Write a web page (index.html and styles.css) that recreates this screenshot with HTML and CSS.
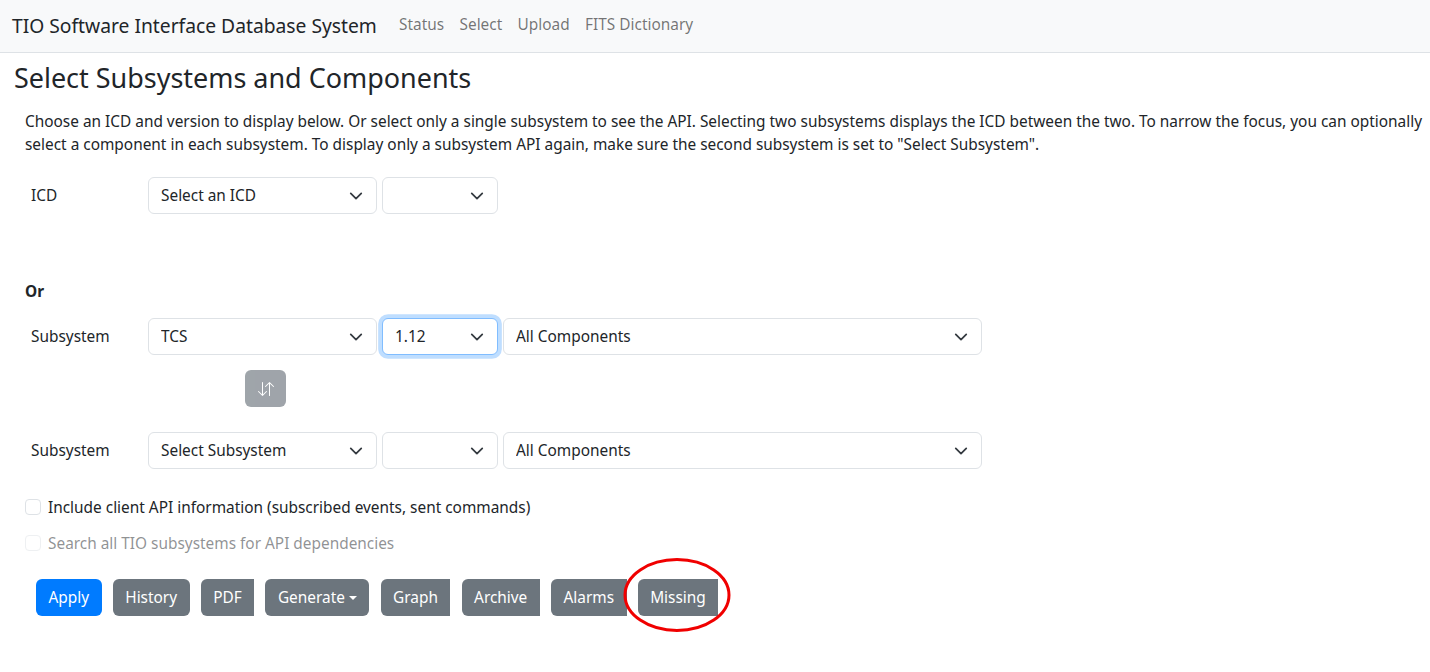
FILE: index.html
```html
<!DOCTYPE html>
<html lang="en">
<head>
    <meta charset="UTF-8">
    <meta name="viewport" content="width=device-width, initial-scale=1.0">
    <title>TIO Software Interface Database System</title>
    <link rel="stylesheet" href="styles.css">
</head>
<body>
    <nav class="navbar">
        <span class="brand">TIO Software Interface Database System</span>
        <a class="nav-link" href="#">Status</a>
        <a class="nav-link" href="#">Select</a>
        <a class="nav-link" href="#">Upload</a>
        <a class="nav-link" href="#">FITS Dictionary</a>
    </nav>
    <main>
        <h3 class="page-title">Select Subsystems and Components</h3>
        <p class="intro">Choose an ICD and version to display below. Or select only a single subsystem to see the API. Selecting two subsystems displays the ICD between the two. To narrow the focus, you can optionally select a component in each subsystem. To display only a subsystem API again, make sure the second subsystem is set to "Select Subsystem".</p>

        <div class="select-row icd-row">
            <label class="row-label">ICD</label>
            <select class="form-select subsystem-select"><option>Select an ICD</option></select>
            <select class="form-select version-select"><option></option></select>
        </div>

        <div class="or-label">Or</div>

        <div class="select-row">
            <label class="row-label">Subsystem</label>
            <select class="form-select subsystem-select"><option>TCS</option></select>
            <select class="form-select version-select is-focused"><option>1.12</option></select>
            <select class="form-select component-select"><option>All Components</option></select>
        </div>

        <div class="swap-row">
            <button class="swap-btn" disabled>
                <svg width="16" height="16" viewBox="0 0 16 16" fill="currentColor">
                    <path fill-rule="evenodd" d="M11.5 15a.5.5 0 0 0 .5-.5V2.707l3.146 3.147a.5.5 0 0 0 .708-.708l-4-4a.5.5 0 0 0-.708 0l-4 4a.5.5 0 1 0 .708.708L11 2.707V14.500a.5.5 0 0 0 .5.5zm-7-14a.5.5 0 0 1 .5.5v11.793l3.146-3.147a.5.5 0 0 1 .708.708l-4 4a.5.5 0 0 1-.708 0l-4-4a.5.5 0 0 1 .708-.708L4 13.293V1.500a.5.5 0 0 1 .5-.5z"/>
                </svg>
            </button>
        </div>

        <div class="select-row">
            <label class="row-label">Subsystem</label>
            <select class="form-select subsystem-select"><option>Select Subsystem</option></select>
            <select class="form-select version-select"><option></option></select>
            <select class="form-select component-select"><option>All Components</option></select>
        </div>

        <div class="check-row">
            <span class="check-box"></span>
            <span>Include client API information (subscribed events, sent commands)</span>
        </div>
        <div class="check-row is-disabled">
            <span class="check-box"></span>
            <span>Search all TIO subsystems for API dependencies</span>
        </div>

        <div class="button-row">
            <button class="btn btn-primary">Apply</button>
            <button class="btn">History</button>
            <button class="btn btn-flat">PDF</button>
            <button class="btn">Generate<span class="caret"></span></button>
            <button class="btn btn-flat">Graph</button>
            <button class="btn btn-flat">Archive</button>
            <button class="btn btn-flat">Alarms</button>
            <button class="btn btn-flat">Missing</button>
        </div>
    </main>
    <svg class="annotation" width="112" height="80" viewBox="0 0 112 80">
        <ellipse cx="56" cy="40" rx="52" ry="35.5" fill="none" stroke="#f00000" stroke-width="3"/>
    </svg>
</body>
</html>
```

FILE: styles.css
```css
*{
    box-sizing: border-box;
    padding: 0;
    margin: 0;
}
body{
    font-family: "Noto Sans", sans-serif;
    font-size: 15.4px;
    line-height: 23.1px;
    color: #212529;
    background: white;
    height: 672px;
    overflow: hidden;
    position: relative;
}
.navbar{
    height: 53px;
    display: flex;
    align-items: center;
    padding: 0 12px;
    background-color: #f8f9fa;
    border-bottom: 1px solid #dee2e6;
}
.brand{
    font-size: 19.25px;
    margin-right: 14.5px;
}
.nav-link{
    padding: 0 7.7px 2px;
    color: rgba(0, 0, 0, .55);
    text-decoration: none;
}
main{
    padding: 0 0 0 14px;
}
.page-title{
    font-size: 26.95px;
    font-weight: 400;
    line-height: 32px;
    margin-top: 9px;
}
.intro{
    margin: 16px 0 0 11px;
}
.select-row{
    display: flex;
    align-items: center;
    gap: 5px;
    margin-left: 17px;
}
.icd-row{
    margin-top: 21px;
}
.row-label{
    width: 112px;
}
.form-select{
    height: 37px;
    appearance: none;
    font: inherit;
    color: #212529;
    padding: 0 36px 0 12px;
    border: 1px solid #dee2e6;
    border-radius: 6px;
    background: white url("data:image/svg+xml,%3csvg xmlns='http://www.w3.org/2000/svg' viewBox='0 0 16 16'%3e%3cpath fill='none' stroke='%23343a40' stroke-linecap='round' stroke-linejoin='round' stroke-width='2' d='m2 5 6 6 6-6'/%3e%3c/svg%3e") no-repeat right 13px center / 14px 14px;
}
.subsystem-select{
    width: 229px;
}
.version-select{
    width: 116px;
}
.component-select{
    width: 479px;
}
.is-focused{
    border-color: #80bdff;
    box-shadow: 0 0 0 3.85px rgba(0, 123, 255, .25);
}
.or-label{
    font-weight: 700;
    margin: 66px 0 15px 11px;
}
.swap-row{
    margin: 15px 0 25px 231px;
}
.swap-btn{
    display: flex;
    align-items: center;
    justify-content: center;
    width: 41px;
    height: 37px;
    color: white;
    background-color: #6c757d;
    border: none;
    border-radius: 6px;
    opacity: .65;
}
.check-row{
    display: flex;
    align-items: center;
    gap: 7px;
    margin-left: 11px;
    height: 24px;
    margin-top: 12px;
}
.select-row + .check-row{
    margin-top: 26px;
}
.check-box{
    width: 16px;
    height: 16px;
    border: 1px solid #dee2e6;
    border-radius: 4px;
    background: white;
}
.is-disabled{
    color: rgba(33, 37, 41, .5);
}
.is-disabled .check-box{
    opacity: .5;
}
.button-row{
    display: flex;
    gap: 11.15px;
    margin: 24px 0 0 22px;
}
.btn{
    height: 37px;
    padding: 0 12.5px;
    font: inherit;
    color: white;
    background-color: #6c757d;
    border: none;
    border-radius: 6px;
}
.btn-primary{
    background-color: #007bff;
}
.btn-flat{
    border-radius: 6px 0 0 6px;
}
.caret{
    display: inline-block;
    margin-left: 4px;
    vertical-align: 3px;
    border-top: 4.6px solid white;
    border-left: 4.6px solid transparent;
    border-right: 4.6px solid transparent;
}
.annotation{
    position: absolute;
    left: 621px;
    top: 555px;
}
```
